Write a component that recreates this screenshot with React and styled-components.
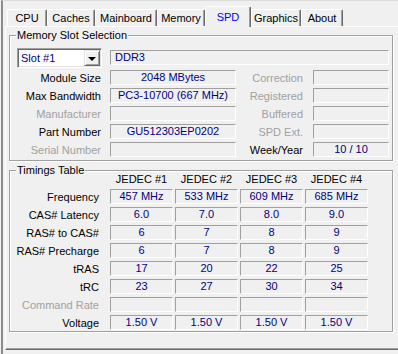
import styled, { createGlobalStyle } from "styled-components"

const GlobalStyle = createGlobalStyle`
    html, body {
        margin: 0;
        padding: 0;
        background: #f0f0f0;
    }
    body {
        font-family: "Liberation Sans", Arial, sans-serif;
        font-size: 11px;
        color: #000000;
    }
`

const tabs = [
    { name: "CPU", w: 40 },
    { name: "Caches", w: 48 },
    { name: "Mainboard", w: 62 },
    { name: "Memory", w: 48 },
    { name: "SPD", w: 46, selected: true },
    { name: "Graphics", w: 50 },
    { name: "About", w: 42 },
]

const info = [
    { l: "Module Size", v: "2048 MBytes", r: "Correction", rv: "", rOff: true },
    { l: "Max Bandwidth", v: "PC3-10700 (667 MHz)", r: "Registered", rv: "", rOff: true },
    { l: "Manufacturer", lOff: true, v: "", r: "Buffered", rv: "", rOff: true },
    { l: "Part Number", v: "GU512303EP0202", r: "SPD Ext.", rv: "", rOff: true },
    { l: "Serial Number", lOff: true, v: "", r: "Week/Year", rv: "10 / 10" },
]

const timings = [
    { l: "Frequency", v: ["457 MHz", "533 MHz", "609 MHz", "685 MHz"] },
    { l: "CAS# Latency", v: ["6.0", "7.0", "8.0", "9.0"] },
    { l: "RAS# to CAS#", v: ["6", "7", "8", "9"] },
    { l: "RAS# Precharge", v: ["6", "7", "8", "9"] },
    { l: "tRAS", v: ["17", "20", "22", "25"] },
    { l: "tRC", v: ["23", "27", "30", "34"] },
    { l: "Command Rate", v: ["", "", "", ""], off: true },
    { l: "Voltage", v: ["1.50 V", "1.50 V", "1.50 V", "1.50 V"] },
]

export default function App() {
    return (
        <>
            <GlobalStyle />
            <Window>
                <TabStrip>
                    {tabs.map((t) => (
                        <Tab key={t.name} $w={t.w} $selected={t.selected}>
                            {t.name}
                        </Tab>
                    ))}
                </TabStrip>
                <Panel>
                    <GroupBox>
                        <Legend>Memory Slot Selection</Legend>
                        <InfoGrid>
                            <Combo>
                                <ComboText>Slot #1</ComboText>
                                <ComboButton>
                                    <Arrow />
                                </ComboButton>
                            </Combo>
                            <Field $span $align="left">
                                DDR3
                            </Field>
                            {info.map((row) => (
                                <InfoRow key={row.l} row={row} />
                            ))}
                        </InfoGrid>
                    </GroupBox>
                    <GroupBox $gap>
                        <Legend>Timings Table</Legend>
                        <TimingGrid>
                            <span />
                            {["JEDEC #1", "JEDEC #2", "JEDEC #3", "JEDEC #4"].map((h) => (
                                <Header key={h}>{h}</Header>
                            ))}
                            {timings.map((row) => (
                                <TimingRow key={row.l} row={row} />
                            ))}
                        </TimingGrid>
                    </GroupBox>
                </Panel>
            </Window>
        </>
    )
}

function InfoRow({ row }) {
    return (
        <>
            <Label $off={row.lOff}>{row.l}</Label>
            <Field>{row.v}</Field>
            <Label $off={row.rOff} $right>
                {row.r}
            </Label>
            <Field>{row.rv}</Field>
        </>
    )
}

function TimingRow({ row }) {
    return (
        <>
            <Label $off={row.off}>{row.l}</Label>
            {row.v.map((v, i) => (
                <Field key={i}>{v}</Field>
            ))}
        </>
    )
}

const Window = styled.div`
    width: 397px;
    height: 354px;
    box-sizing: border-box;
    margin-left: 1px;
    border-left: 2px solid #8c8c8c;
    border-top: 1px solid #dcdcdc;
    padding-left: 2px;
    overflow: hidden;
    display: flex;
    flex-direction: column;
`

const TabStrip = styled.div`
    display: flex;
    align-items: flex-end;
    height: 25px;
    padding-left: 2px;
    position: relative;
    z-index: 1;
`

const Tab = styled.div`
    width: ${(p) => p.$w}px;
    height: ${(p) => (p.$selected ? 21 : 17)}px;
    margin-bottom: ${(p) => (p.$selected ? -1 : 0)}px;
    box-sizing: border-box;
    background: #f0f0f0;
    border-top: 1px solid #ffffff;
    border-left: 1px solid #ffffff;
    border-right: 1px solid #696969;
    border-radius: 2px 2px 0 0;
    box-shadow: inset -1px 0 0 #a0a0a0;
    color: ${(p) => (p.$selected ? "#0000ff" : "#000000")};
    display: flex;
    align-items: center;
    justify-content: center;
    padding-bottom: ${(p) => (p.$selected ? 1 : 0)}px;
    flex-shrink: 0;
`

const Panel = styled.div`
    width: 400px;
    height: 324px;
    box-sizing: border-box;
    border-top: 1px solid #ffffff;
    border-left: 1px solid #ffffff;
    border-bottom: 1px solid #696969;
    box-shadow: inset 0 -1px 0 #a0a0a0;
    padding: 8px 0 0 3px;
`

const GroupBox = styled.div`
    position: relative;
    width: 384px;
    box-sizing: border-box;
    margin-top: ${(p) => (p.$gap ? 9 : 0)}px;
    border: 1px solid #a0a0a0;
    box-shadow: 1px 1px 0 #ffffff, inset 1px 1px 0 #ffffff;
`

const Legend = styled.span`
    position: absolute;
    top: -7px;
    left: 6px;
    padding: 0 1px;
    background: #f0f0f0;
    line-height: 13px;
    color: #000000;
`

const InfoGrid = styled.div`
    display: grid;
    grid-template-columns: 93px 126px 77px 76px;
    grid-template-rows: 19px repeat(5, 15px);
    row-gap: 3px;
    padding: 12px 0 3px 7px;
`

const TimingGrid = styled.div`
    display: grid;
    grid-template-columns: 91px repeat(4, 63px);
    grid-template-rows: 14px repeat(8, 15px);
    column-gap: 2px;
    row-gap: 3px;
    padding: 1px 0 1px 7px;
`

const Label = styled.div`
    display: flex;
    align-items: center;
    justify-content: flex-end;
    padding-right: ${(p) => (p.$right ? 10 : 9)}px;
    white-space: nowrap;
    color: ${(p) => (p.$off ? "#a0a0a0" : "#000000")};
`

const Header = styled.div`
    display: flex;
    align-items: center;
    justify-content: center;
    color: #000000;
`

const Field = styled.div`
    grid-column: ${(p) => (p.$span ? "2 / 5" : "auto")};
    align-self: center;
    height: 15px;
    box-sizing: border-box;
    border-top: 1px solid #a0a0a0;
    border-left: 1px solid #a0a0a0;
    border-bottom: 1px solid #ffffff;
    border-right: 1px solid #ffffff;
    background: #f0f0f0;
    color: #000080;
    line-height: 13px;
    text-align: ${(p) => p.$align || "center"};
    padding-left: ${(p) => (p.$align === "left" ? 4 : 0)}px;
    white-space: nowrap;
    overflow: hidden;
`

const Combo = styled.div`
    width: 85px;
    height: 20px;
    box-sizing: border-box;
    display: flex;
    align-items: stretch;
    border-top: 1px solid #a0a0a0;
    border-left: 1px solid #a0a0a0;
    border-bottom: 1px solid #ffffff;
    border-right: 1px solid #ffffff;
    box-shadow: inset 1px 1px 0 #696969, inset -1px -1px 0 #e3e3e3;
    background: #ffffff;
    padding: 1px;
`

const ComboText = styled.div`
    flex: 1;
    display: flex;
    align-items: center;
    padding-left: 2px;
    color: #000080;
`

const ComboButton = styled.div`
    width: 16px;
    box-sizing: border-box;
    background: #f0f0f0;
    border-top: 1px solid #e3e3e3;
    border-left: 1px solid #e3e3e3;
    border-bottom: 1px solid #696969;
    border-right: 1px solid #696969;
    box-shadow: inset 1px 1px 0 #ffffff, inset -1px -1px 0 #a0a0a0;
    display: flex;
    align-items: center;
    justify-content: center;
`

const Arrow = styled.span`
    width: 0;
    height: 0;
    border-left: 4px solid transparent;
    border-right: 4px solid transparent;
    border-top: 4px solid #000000;
    margin-top: 1px;
`
